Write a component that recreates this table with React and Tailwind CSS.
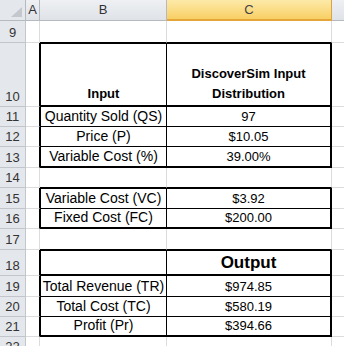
import React from "react";

const GRID = "border-[#dadcdd]";

function RowHead({ n, h }) {
  return (
    <div className={`w-[26px] shrink-0 ${h} bg-[#e4e7eb] border-r border-b border-[#c2c6cc] flex items-end justify-center text-[13px] leading-[19px] text-[#333]`}>
      {n}
    </div>
  );
}

function Row({ n, h, a, b, c, children }) {
  return (
    <div className="flex">
      <RowHead n={n} h={h} />
      <div className={`w-[14px] shrink-0 ${h} ${a}`} />
      <div className={`w-[127px] shrink-0 ${h} ${b} flex items-end justify-center`}>
        {children && children[0]}
      </div>
      <div className={`w-[165px] shrink-0 ${h} ${c} flex items-end justify-center`}>
        {children && children[1]}
      </div>
      <div className={`flex-1 ${h} border-b ${GRID}`} />
    </div>
  );
}

const gapA = `border-r border-b ${GRID}`;
const boxA = "border-r border-b border-r-black border-b-[#dadcdd]";

const txt = "leading-[19px] text-[14px] text-black";
const num = "leading-[19px] text-[13px] text-black";

export default function App() {
  return (
    <div
      className="w-[344px] h-[346px] overflow-hidden bg-white"
      style={{ fontFamily: '"Liberation Sans", Arial, sans-serif' }}
    >
      {/* column headers */}
      <div className="flex h-[21px]">
        <div className="w-[26px] shrink-0 border-r border-b border-[#b5bac0] bg-[#e4e7eb] flex">
          <svg width="25" height="20" viewBox="0 0 25 20">
            <polygon points="22,7 22,17 11,17" fill="#c4c8ce" />
          </svg>
        </div>
        <div className="w-[14px] shrink-0 border-r border-b border-[#b5bac0] bg-gradient-to-b from-[#eef0f3] to-[#dfe2e7] flex items-center justify-center text-[13px] text-[#333]">
          A
        </div>
        <div className="w-[127px] shrink-0 border-r border-b border-[#b5bac0] bg-gradient-to-b from-[#eef0f3] to-[#dfe2e7] flex items-center justify-center text-[13px] text-[#333]">
          B
        </div>
        <div className="w-[165px] shrink-0 border-r border-b-2 border-r-[#d9a441] border-b-[#e4a63a] bg-gradient-to-b from-[#fdeaa8] to-[#f8cf62] flex items-center justify-center text-[13px] text-[#444]">
          C
        </div>
        <div className="flex-1 border-b border-[#b5bac0] bg-gradient-to-b from-[#eef0f3] to-[#dfe2e7]" />
      </div>

      <Row n="9" h="h-[22px]" a={gapA} b="border-r border-b border-r-[#dadcdd] border-b-black" c="border-r border-b border-r-[#dadcdd] border-b-black" />

      <Row
        n="10"
        h="h-[64px]"
        a={boxA}
        b="border-l border-r border-t border-b-2 border-black"
        c="border-t border-r-2 border-b-2 border-black"
      >
        <div className="text-[13px] leading-[20px] font-bold pb-[1px]">Input</div>
        <div className="text-[13px] leading-[20px] font-bold text-center pb-[1px]">
          DiscoverSim Input
          <br />
          Distribution
        </div>
      </Row>

      <Row n="11" h="h-[20px]" a={boxA} b="border-l border-r border-b border-black" c="border-r-2 border-b border-black">
        <span className={txt}>Quantity Sold (QS)</span>
        <span className={num}>97</span>
      </Row>
      <Row n="12" h="h-[20px]" a={boxA} b="border-l border-r border-b border-black" c="border-r-2 border-b border-black">
        <span className={txt}>Price (P)</span>
        <span className={num}>$10.05</span>
      </Row>
      <Row n="13" h="h-[21px]" a={boxA} b="border-l border-r border-b-2 border-black" c="border-r-2 border-b-2 border-black">
        <span className={txt}>Variable Cost (%)</span>
        <span className={num}>39.00%</span>
      </Row>

      <Row n="14" h="h-[20px]" a={gapA} b="border-r border-b border-r-[#dadcdd] border-b-black" c="border-r border-b border-r-[#dadcdd] border-b-black" />

      <Row n="15" h="h-[21px]" a={boxA} b="border-l border-r border-t border-b border-black" c="border-t border-r-2 border-b border-black">
        <span className={txt}>Variable Cost (VC)</span>
        <span className={num}>$3.92</span>
      </Row>
      <Row n="16" h="h-[20px]" a={boxA} b="border-l border-r border-b-2 border-black" c="border-r-2 border-b-2 border-black">
        <span className={txt}>Fixed Cost (FC)</span>
        <span className={num}>$200.00</span>
      </Row>

      <Row n="17" h="h-[21px]" a={gapA} b="border-r border-b border-r-[#dadcdd] border-b-black" c="border-r border-b border-r-[#dadcdd] border-b-black" />

      <Row n="18" h="h-[26px]" a={boxA} b="border-l border-r border-t border-b-2 border-black" c="border-t border-r-2 border-b-2 border-black">
        <span />
        <span className="text-[17px] leading-[23px] font-bold">Output</span>
      </Row>
      <Row n="19" h="h-[21px]" a={boxA} b="border-l border-r border-b border-black" c="border-r-2 border-b border-black">
        <span className={txt}>Total Revenue (TR)</span>
        <span className={num}>$974.85</span>
      </Row>
      <Row n="20" h="h-[20px]" a={boxA} b="border-l border-r border-b border-black" c="border-r-2 border-b border-black">
        <span className={txt}>Total Cost (TC)</span>
        <span className={num}>$580.19</span>
      </Row>
      <Row n="21" h="h-[20px]" a={boxA} b="border-l border-r border-b-2 border-black" c="border-r-2 border-b-2 border-black">
        <span className={txt}>Profit (Pr)</span>
        <span className={num}>$394.66</span>
      </Row>

      <Row n="22" h="h-[20px]" a={gapA} b={`border-r border-b ${GRID}`} c={`border-r border-b ${GRID}`} />
    </div>
  );
}
